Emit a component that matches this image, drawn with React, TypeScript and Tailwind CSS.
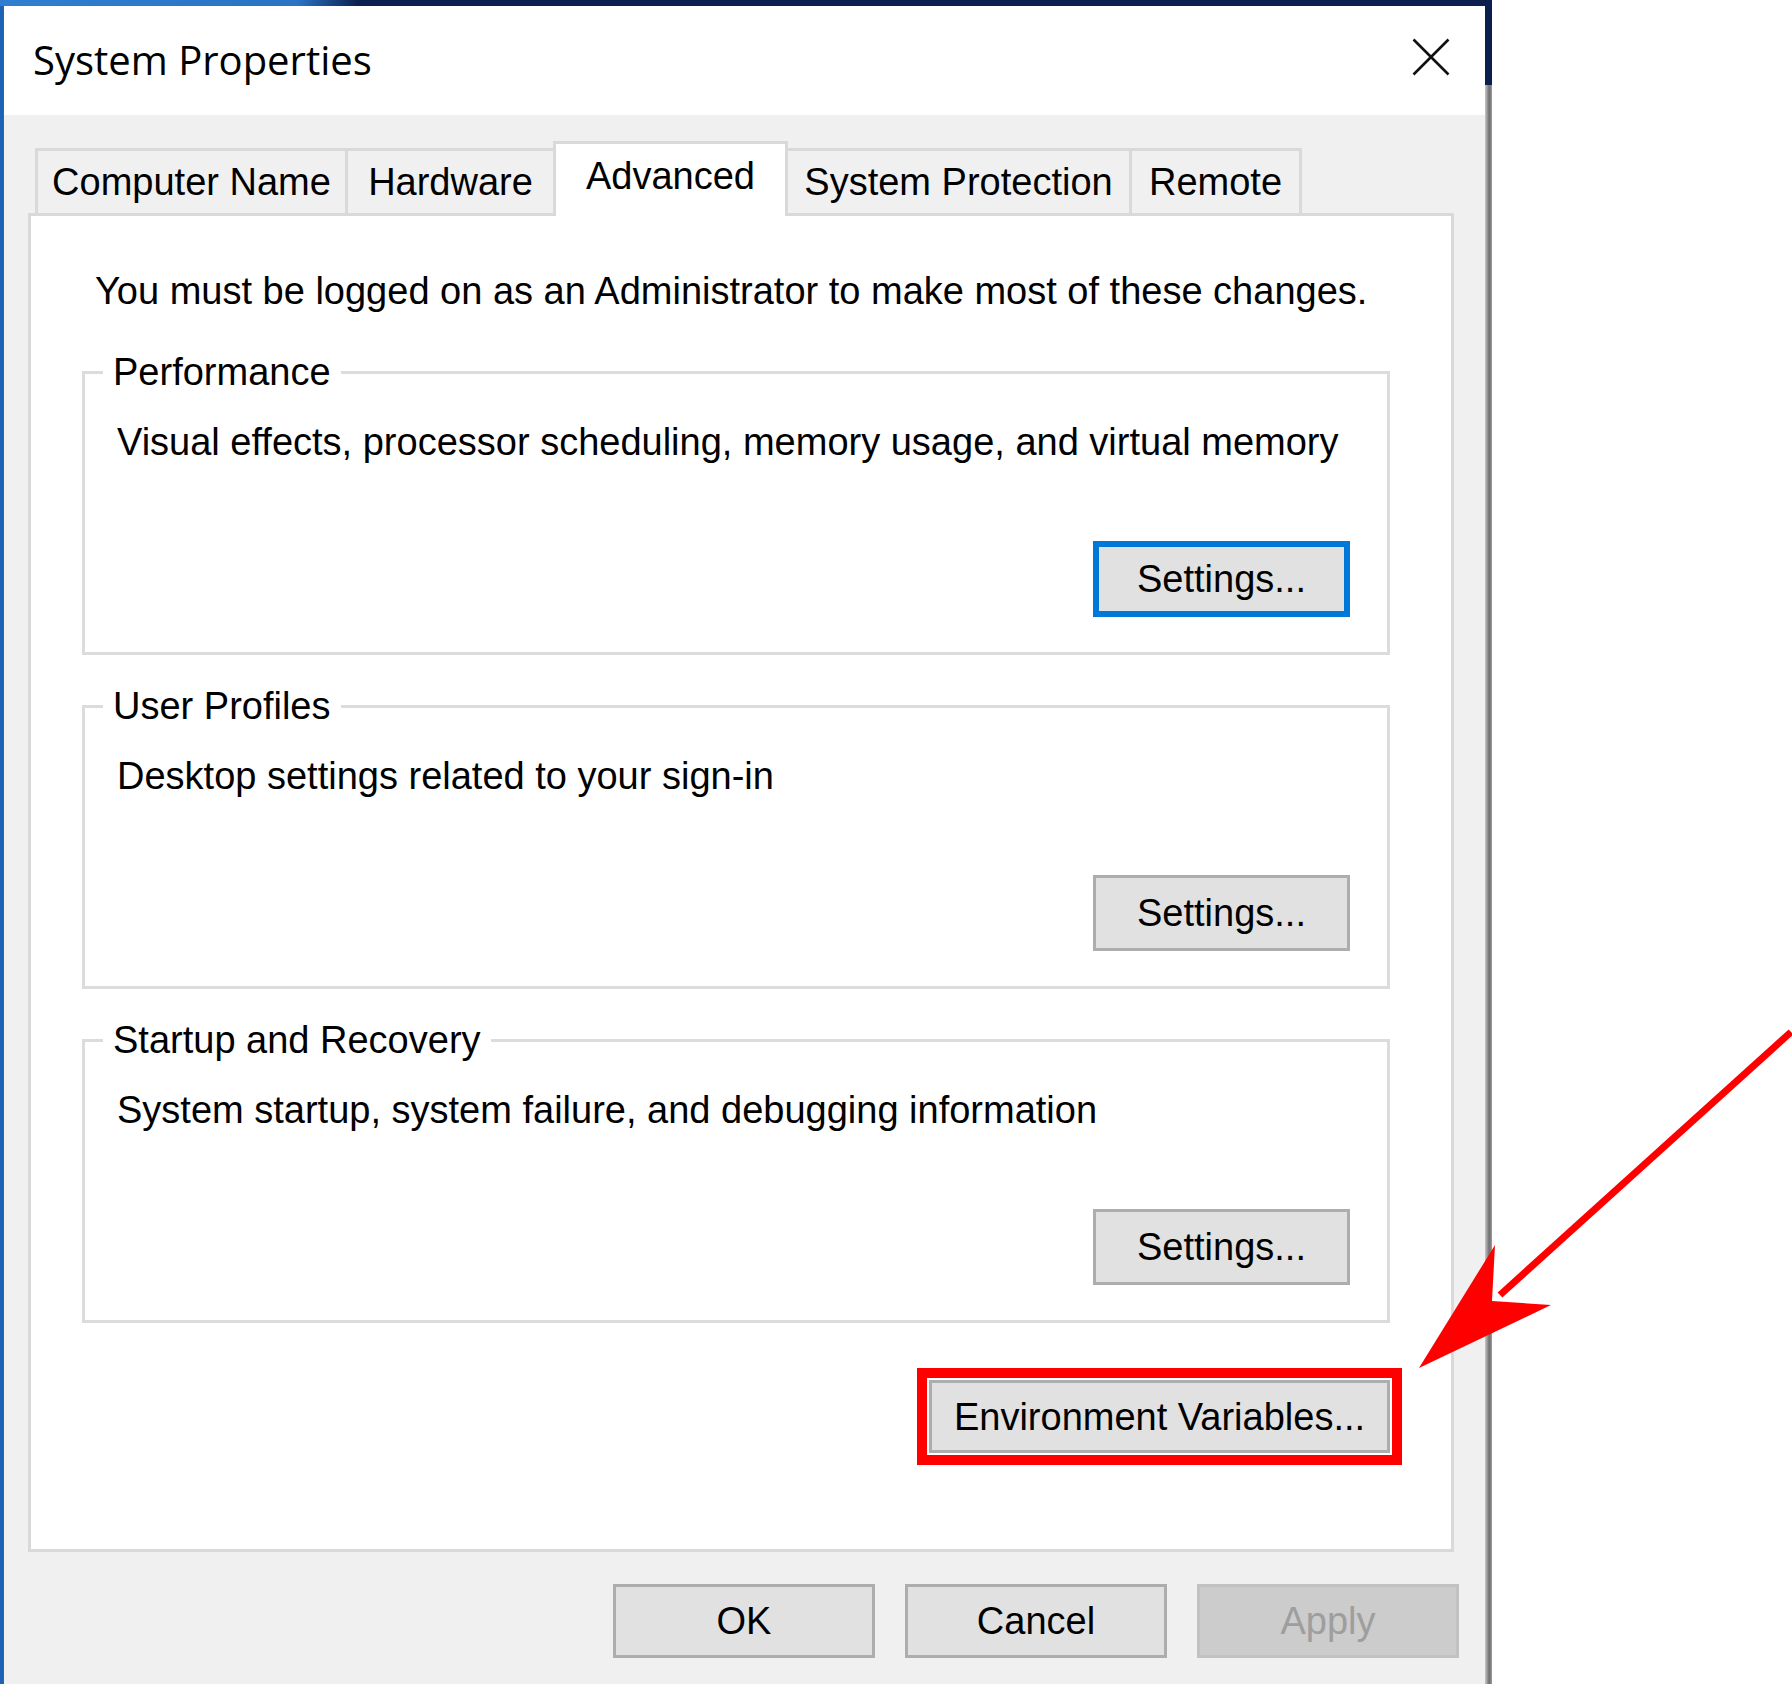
import React from "react";

function Tab({ label, w, first }: { label: string; w: string; first?: boolean }) {
  return (
    <div
      className={
        "h-[65px] flex justify-center pt-[9px] bg-[#f0f0f0] border-t-[3px] border-r-[3px] border-[#d9d9d9] text-[38px] leading-[44px] whitespace-nowrap " +
        (first ? "border-l-[3px] " : "") +
        w
      }
    >
      {label}
    </div>
  );
}

function SettingsButton({ focused }: { focused?: boolean }) {
  if (focused) {
    return (
      <div className="w-[257px] h-[76px] border-[6px] border-[#0078d7] bg-[#e1e1e1] flex items-center justify-center text-[38px] leading-[44px]">
        Settings...
      </div>
    );
  }
  return (
    <div className="w-[257px] h-[76px] border-[3px] border-[#adadad] bg-[#e1e1e1] flex items-center justify-center text-[38px] leading-[44px]">
      Settings...
    </div>
  );
}

function Group({ title, desc, focused }: { title: string; desc: string; focused?: boolean }) {
  return (
    <fieldset className="m-0 p-0 min-w-0 border-[3px] border-[#dcdcdc]">
      <legend className="ml-[18px] px-[10px] text-[38px] leading-[44px]">{title}</legend>
      <div className="flex flex-col pl-[32px] pr-[37px] pb-[35px]">
        <div className="mt-[26px] text-[38px] leading-[44px] whitespace-nowrap">{desc}</div>
        <div className="mt-[77px] flex justify-end">
          <SettingsButton focused={focused} />
        </div>
      </div>
    </fieldset>
  );
}

function BottomButton({ label, disabled }: { label: string; disabled?: boolean }) {
  if (disabled) {
    return (
      <div className="w-[262px] h-[74px] border-[3px] border-[#c2c2c2] bg-[#cccccc] text-[#9e9e9e] flex items-center justify-center text-[38px] leading-[44px]">
        {label}
      </div>
    );
  }
  return (
    <div className="w-[262px] h-[74px] border-[3px] border-[#adadad] bg-[#e1e1e1] flex items-center justify-center text-[38px] leading-[44px]">
      {label}
    </div>
  );
}

export default function App() {
  return (
    <div className="relative w-[1792px] h-[1684px] overflow-hidden bg-white flex text-black [font-family:'Liberation_Sans',Arial,sans-serif]">
      {/* Desktop + window area */}
      <div className="w-[1492px] h-full flex flex-col">
        <div className="h-[6px] bg-[linear-gradient(90deg,#2f7fd1_0%,#2a72c4_20%,#0c1f4e_24%,#0c1f4e_100%)]" />
        <div className="flex flex-1 min-h-0">
          <div className="w-[3px] bg-[#1d62b4]" />
          {/* Window */}
          <div className="w-[1482px] flex flex-col border-l border-[#5c5c5c] bg-[#f0f0f0]">
            {/* Title bar */}
            <div className="h-[109px] bg-white flex items-start justify-between pl-[29px] pr-[35px]">
              <span className="mt-[33px] text-[40px] leading-[41px] text-black [font-family:'Open_Sans',sans-serif]">
                System Properties
              </span>
              <svg className="mt-[32px]" width="38" height="38" viewBox="0 0 38 38">
                <path d="M1.5 1.5L36.5 36.5M36.5 1.5L1.5 36.5" stroke="#111" strokeWidth="2.6" fill="none" />
              </svg>
            </div>
            {/* Body */}
            <div className="flex flex-col pl-[24px] pr-[31px]">
              {/* Tabs */}
              <div className="mt-[33px] h-[65px] flex items-end pl-[7px]">
                <Tab label="Computer Name" w="w-[313px]" first />
                <Tab label="Hardware" w="w-[208px]" />
                <div className="relative z-10 -ml-[3px] -mb-[3px] w-[235px] h-[75px] flex justify-center pt-[10px] bg-white border-t-[3px] border-l-[3px] border-r-[3px] border-[#d9d9d9] text-[38px] leading-[44px]">
                  Advanced
                </div>
                <Tab label="System Protection" w="w-[344px]" />
                <Tab label="Remote" w="w-[170px]" />
              </div>
              {/* Panel */}
              <div className="h-[1339px] bg-white border-[3px] border-[#d9d9d9] flex flex-col">
                <div className="mt-[53px] ml-[64px] text-[38px] leading-[44px] whitespace-nowrap">
                  You must be logged on as an Administrator to make most of these changes.
                </div>
                <div className="mt-[37px] ml-[51px] mr-[61px] flex flex-col gap-[29px]">
                  <Group
                    title="Performance"
                    desc="Visual effects, processor scheduling, memory usage, and virtual memory"
                    focused
                  />
                  <Group title="User Profiles" desc="Desktop settings related to your sign-in" />
                  <Group
                    title="Startup and Recovery"
                    desc="System startup, system failure, and debugging information"
                  />
                </div>
                <div className="mt-[45px] flex justify-end pr-[49px]">
                  <div className="border-[10px] border-[#ff0000] p-[2px] bg-white">
                    <div className="w-[461px] h-[73px] border-[3px] border-[#adadad] bg-[#e1e1e1] flex items-center justify-center text-[38px] leading-[44px]">
                      Environment Variables...
                    </div>
                  </div>
                </div>
              </div>
              {/* Bottom buttons */}
              <div className="mt-[32px] -mr-[5px] flex justify-end gap-[30px]">
                <BottomButton label="OK" />
                <BottomButton label="Cancel" />
                <BottomButton label="Apply" disabled />
              </div>
            </div>
          </div>
          {/* Right window edge */}
          <div className="w-[7px] flex flex-col">
            <div className="h-[79px] bg-[#0b1e4c]" />
            <div className="flex-1 bg-[linear-gradient(90deg,#c8c8c8_0%,#6e6e6e_60%,#9a9a9a_100%)]" />
          </div>
        </div>
      </div>
      <div className="flex-1 bg-white" />

      {/* Red annotation arrow */}
      <svg className="absolute left-0 top-0 pointer-events-none" width="1792" height="1684" viewBox="0 0 1792 1684">
        <line x1="1791" y1="1032" x2="1500" y2="1295" stroke="#ff0000" strokeWidth="7" />
        <polygon points="1419,1368 1495,1245 1492,1301 1551,1305" fill="#ff0000" />
      </svg>
    </div>
  );
}
